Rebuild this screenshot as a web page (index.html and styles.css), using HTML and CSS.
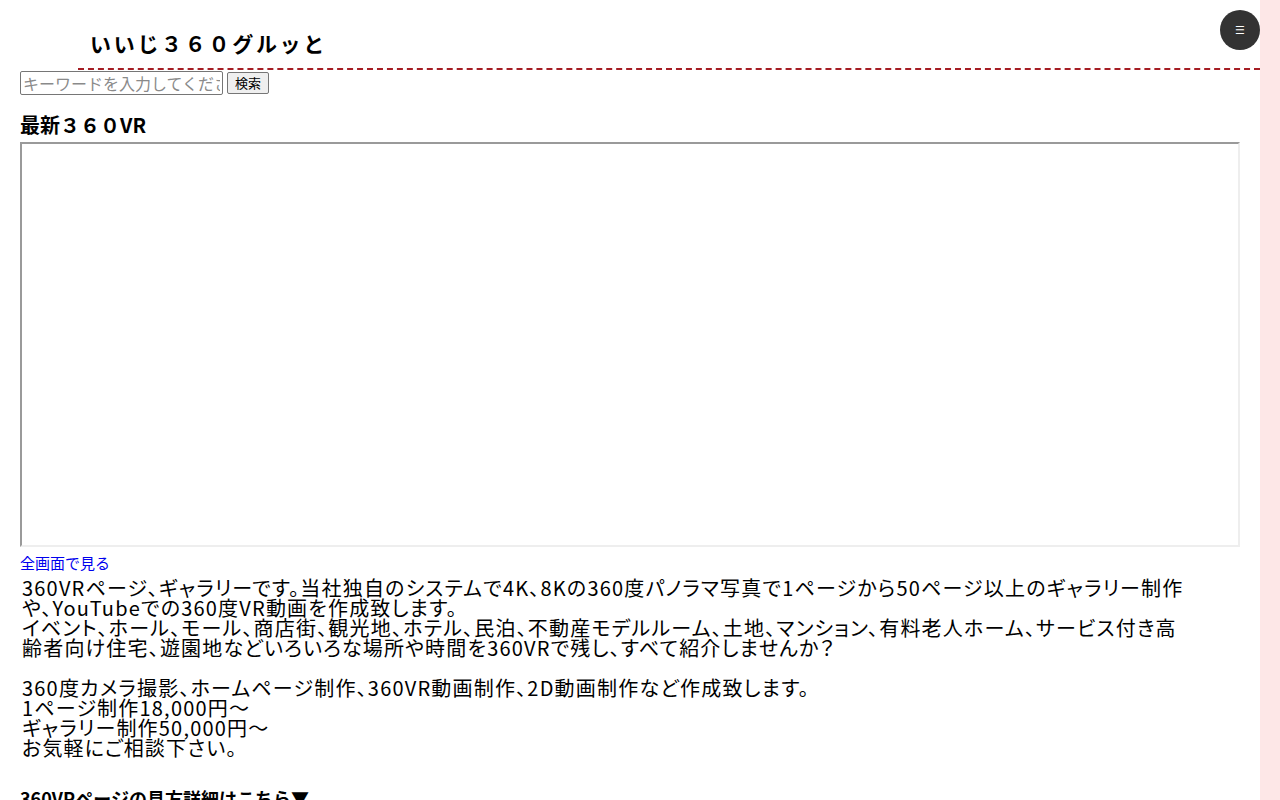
FILE: index.html
```html
<!DOCTYPE html>
<html lang="ja">
<head>
<meta charset="utf-8">
<title>いいじ３６０グルッと</title>
<link rel="stylesheet" href="styles.css">
</head>
<body>
<div class="page">
  <header class="site-header">
    <h1 class="site-title">いいじ３６０グルッと</h1>
  </header>
  <button class="menu-btn" aria-label="メニュー">☰</button>
  <main class="content">
    <form class="search">
      <input class="search-input" type="text" placeholder="キーワードを入力してください">
      <button class="search-btn" type="button">検索</button>
    </form>
    <h2 class="section-title">最新３６０VR</h2>
    <div class="viewer"></div>
    <a class="fullscreen" href="#">全画面で見る</a>
    <p class="desc">360VRページ、ギャラリーです。当社独自のシステムで4K、8Kの360度パノラマ写真で1ページから50ページ以上のギャラリー制作や、YouTubeでの360度VR動画を作成致します。<br>イベント、ホール、モール、商店街、観光地、ホテル、民泊、不動産モデルルーム、土地、マンション、有料老人ホーム、サービス付き高齢者向け住宅、遊園地などいろいろな場所や時間を360VRで残し、すべて紹介しませんか？<br><br>360度カメラ撮影、ホームページ制作、360VR動画制作、2D動画制作など作成致します。<br>1ページ制作18,000円～<br>ギャラリー制作50,000円～<br>お気軽にご相談下さい。</p>
    <h3 class="sub-title">360VRページの見方詳細はこちら▼</h3>
  </main>
</div>
</body>
</html>
```

FILE: styles.css
```css
html {
  background: #fde7e7;
}
body {
  margin: 0;
  font-family: "Noto Sans CJK JP", "Noto Sans", sans-serif;
  color: #000;
}
.page {
  position: relative;
  width: 1260px;
  min-height: 100vh;
  background: #fff;
}
.site-header {
  margin-left: 78px;
  height: 68px;
  border-bottom: 2px dashed #a51d24;
  box-sizing: content-box;
}
.site-title {
  margin: 0;
  padding: 28px 0 0 12px;
  font-size: 21px;
  line-height: 30px;
  font-weight: bold;
  letter-spacing: 2.7px;
}
.menu-btn {
  position: absolute;
  top: 10px;
  right: 0;
  width: 40px;
  height: 40px;
  border: none;
  border-radius: 50%;
  background: #333;
  color: #fff;
  font-size: 11px;
  padding: 0;
  font-family: "DejaVu Sans", sans-serif;
}
.content {
  padding: 0 20px;
}
.search {
  display: flex;
  align-items: center;
  gap: 4px;
  height: 25px;
}
.search-input {
  box-sizing: border-box;
  width: 203px;
  height: 24px;
  margin: 0;
  padding: 1px 2px;
  font-size: 16px;
  font-family: "Noto Sans CJK JP", sans-serif;
  border: 1px solid #767676;
  border-radius: 2px;
}
.search-input::placeholder {
  color: #8a8a8a;
}
.search-btn {
  box-sizing: border-box;
  height: 22px;
  margin: 0;
  padding: 0 7px;
  font-size: 13px;
  font-family: "Noto Sans CJK JP", sans-serif;
  border: 1px solid #767676;
  border-radius: 2px;
  background: #efefef;
  line-height: 18px;
}
.section-title {
  margin: 18px 0 5px;
  font-size: 20px;
  line-height: 24px;
  font-weight: bold;
}
.viewer {
  box-sizing: border-box;
  width: 1220px;
  height: 405px;
  border: 2px solid #eee;
  border-top-color: #9a9a9a;
  border-left-color: #9a9a9a;
}
.fullscreen {
  display: block;
  margin-top: 6px;
  font-size: 15px;
  line-height: 20px;
  color: #0000ee;
  text-decoration: none;
}
.desc {
  margin: 5px 0 0;
  padding-left: 2px;
  width: 1172px;
  font-size: 20px;
  line-height: 20px;
  font-feature-settings: "palt";
  letter-spacing: 1.2px;
}
.sub-title {
  margin: 28px 0 0;
  font-size: 18px;
  line-height: 24px;
  font-weight: bold;
}
```
